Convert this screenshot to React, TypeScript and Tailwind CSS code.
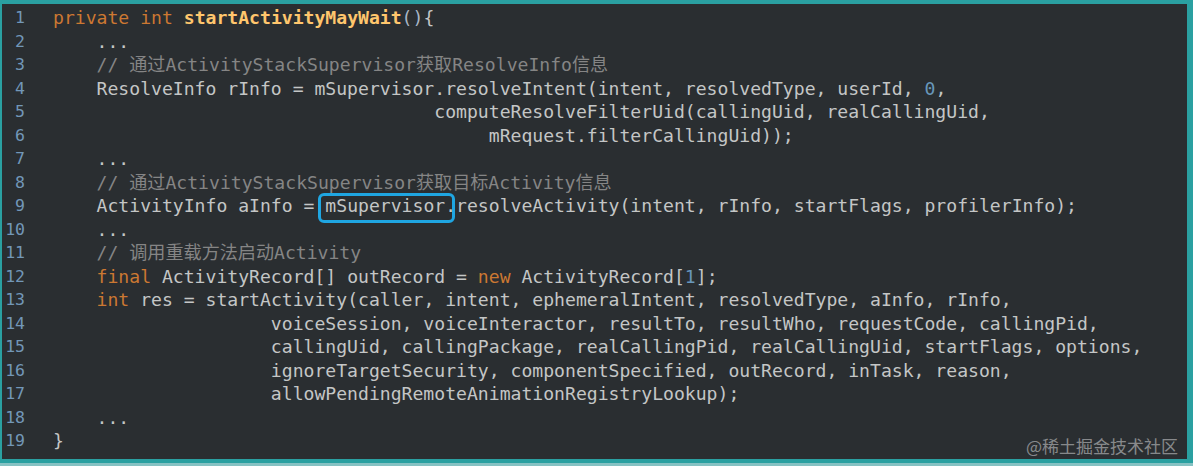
import React from 'react';

type Seg = [string, string?];

const K = 'text-[#cc7832]';
const N = 'text-[#6897bb]';
const C = 'text-[#858585]';
const F = 'text-[#ffc66d] font-bold';

const LINES: Seg[][] = [
  [['private int', K], [' '], ['startActivityMayWait', F], ['()', 'text-[#a9b7c6]'], ['{']],
  [['    ...']],
  [['    // 通过ActivityStackSupervisor获取ResolveInfo信息', C]],
  [['    ResolveInfo rInfo = mSupervisor.resolveIntent(intent, resolvedType, userId, '], ['0', N], [',']],
  [['                                   computeResolveFilterUid(callingUid, realCallingUid,']],
  [['                                        mRequest.filterCallingUid));']],
  [['    ...']],
  [['    // 通过ActivityStackSupervisor获取目标Activity信息', C]],
  [['    ActivityInfo aInfo = '], ['mSupervisor', 'box'], ['.resolveActivity(intent, rInfo, startFlags, profilerInfo);']],
  [['    ...']],
  [['    // 调用重载方法启动Activity', C]],
  [['    '], ['final', K], [' ActivityRecord[] outRecord = '], ['new', K], [' ActivityRecord['], ['1', N], ['];']],
  [['    '], ['int', K], [' res = startActivity(caller, intent, ephemeralIntent, resolvedType, aInfo, rInfo,']],
  [['                    voiceSession, voiceInteractor, resultTo, resultWho, requestCode, callingPid,']],
  [['                    callingUid, callingPackage, realCallingPid, realCallingUid, startFlags, options,']],
  [['                    ignoreTargetSecurity, componentSpecified, outRecord, inTask, reason,']],
  [['                    allowPendingRemoteAnimationRegistryLookup);']],
  [['    ...']],
  [['}']],
];

const Segment: React.FC<{ seg: Seg }> = ({ seg }) => {
  const [text, cls] = seg;
  if (cls === 'box') {
    return (
      <span className="relative inline-block">
        {text}
        <span className="absolute -left-[7px] -right-[10px] -top-[1px] -bottom-[5px] rounded-[6px] border-[3px] border-[#1fa6e2]"></span>
      </span>
    );
  }
  return <span className={cls}>{text}</span>;
};

export default function App() {
  return (
    <div className="w-[1193px] h-[466px] flex flex-col bg-[#2aa0a1] overflow-hidden">
      <div className="pt-[4px] pl-[2px] pr-[6px]">
        <div
          className="relative h-[455px] bg-[#2a2e31] pt-[2px] text-[#c4c6c6]"
          style={{ fontFamily: '"DejaVu Sans Mono", "Noto Sans CJK SC", monospace' }}
        >
          {LINES.map((line, i) => (
            <div key={i} className="flex h-[23.5px] leading-[23.5px] items-center">
              <div className="w-[23px] shrink-0 text-right text-[16.5px] text-[#7297b8]">{i + 1}</div>
              <div className="pl-[28px] whitespace-pre text-[18.1px]">
                {line.map((seg, j) => (
                  <Segment key={j} seg={seg} />
                ))}
              </div>
            </div>
          ))}
          <div
            className="absolute right-[9px] bottom-[1px] text-[17px] text-white/45"
            style={{ fontFamily: '"Noto Sans CJK SC", sans-serif' }}
          >
            @稀土掘金技术社区
          </div>
        </div>
      </div>
      <div className="h-[4px] bg-[#2aa0a1]"></div>
      <div className="flex-1 bg-[#86c2c3]"></div>
    </div>
  );
}
